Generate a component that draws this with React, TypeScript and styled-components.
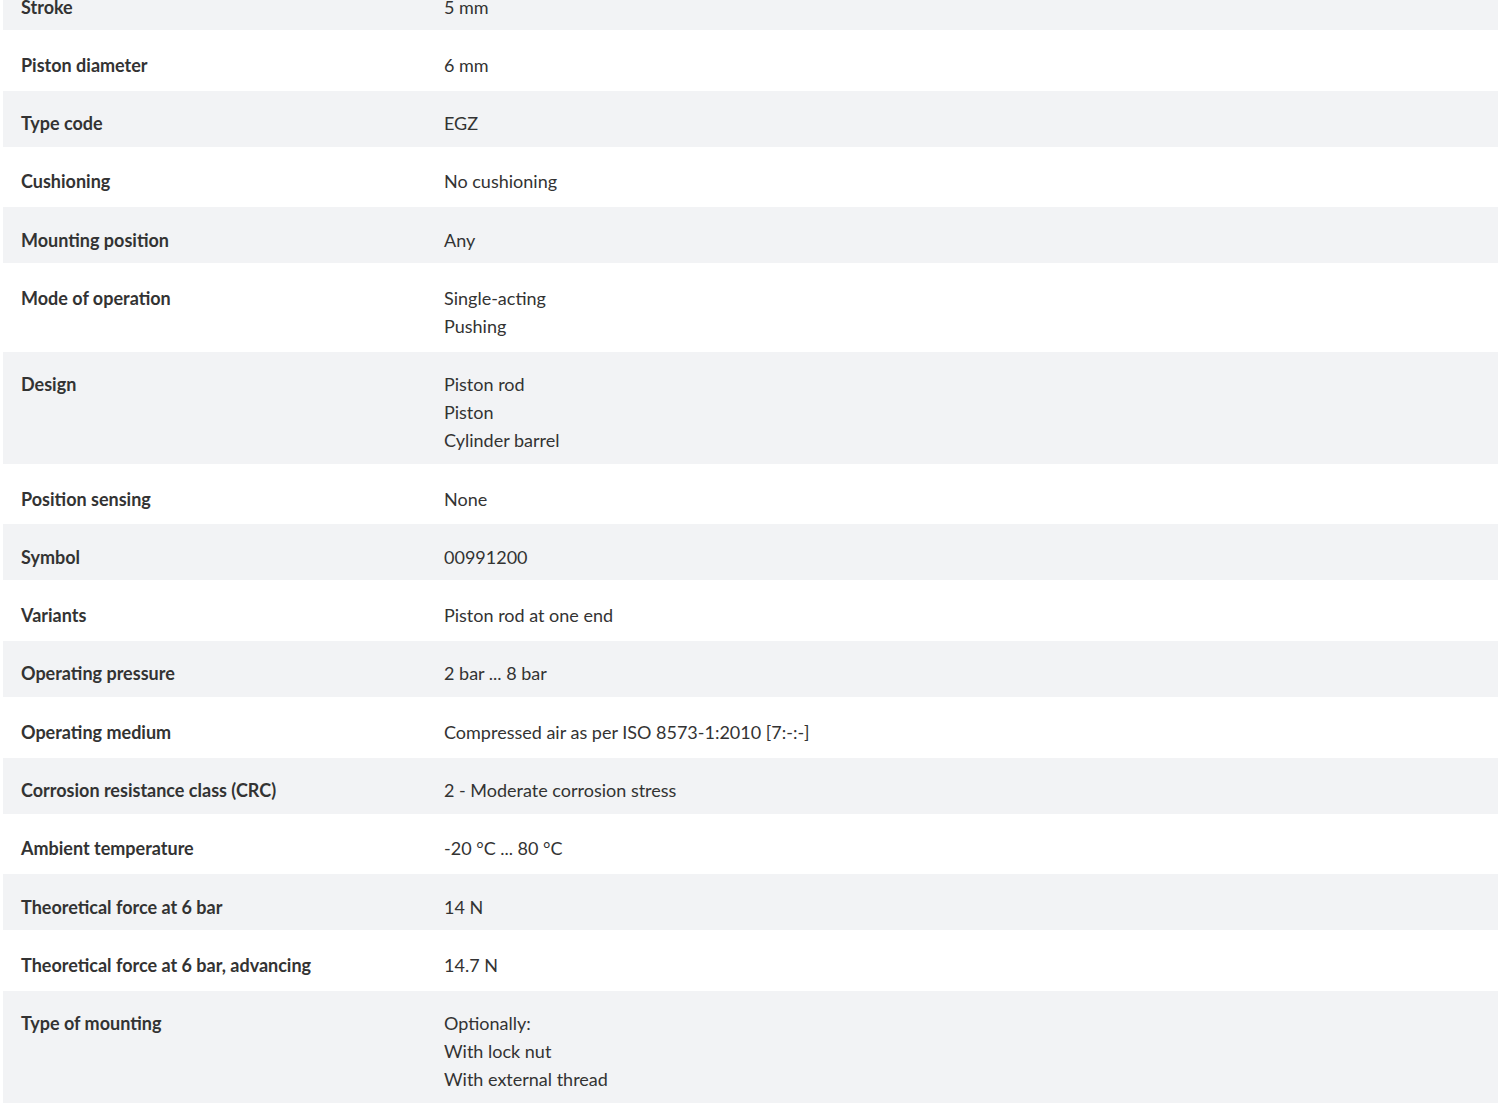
import React, { FC } from "react";
import styled, { createGlobalStyle } from "styled-components";

interface Spec {
  label: string;
  values: string[];
}

const specs: Spec[] = [
  { label: "Stroke", values: ["5 mm"] },
  { label: "Piston diameter", values: ["6 mm"] },
  { label: "Type code", values: ["EGZ"] },
  { label: "Cushioning", values: ["No cushioning"] },
  { label: "Mounting position", values: ["Any"] },
  { label: "Mode of operation", values: ["Single-acting", "Pushing"] },
  { label: "Design", values: ["Piston rod", "Piston", "Cylinder barrel"] },
  { label: "Position sensing", values: ["None"] },
  { label: "Symbol", values: ["00991200"] },
  { label: "Variants", values: ["Piston rod at one end"] },
  { label: "Operating pressure", values: ["2 bar ... 8 bar"] },
  { label: "Operating medium", values: ["Compressed air as per ISO 8573-1:2010 [7:-:-]"] },
  { label: "Corrosion resistance class (CRC)", values: ["2 - Moderate corrosion stress"] },
  { label: "Ambient temperature", values: ["-20 °C ... 80 °C"] },
  { label: "Theoretical force at 6 bar", values: ["14 N"] },
  { label: "Theoretical force at 6 bar, advancing", values: ["14.7 N"] },
  { label: "Type of mounting", values: ["Optionally:", "With lock nut", "With external thread"] },
];

const App: FC = () => {
  return (
    <>
      <GlobalStyle />
      <Page>
        <SpecTable>
          {specs.map((spec, i) => (
            <Row key={spec.label} $shaded={i % 2 === 0}>
              <Label>{spec.label}</Label>
              <Value>
                {spec.values.map((v) => (
                  <Line key={v}>{v}</Line>
                ))}
              </Value>
            </Row>
          ))}
        </SpecTable>
      </Page>
    </>
  );
};

export default App;

//---------------------------------styled component-----------------------------------
const GlobalStyle = createGlobalStyle`
  body {
    margin: 0;
    background: #fff;
    font-family: "Lato", "Open Sans", sans-serif;
    color: #333;
    overflow: hidden;
  }
`;

const Page = styled.div`
  height: 1111px;
  overflow: hidden;
  padding: 0 2px 0 3px;
`;

const SpecTable = styled.div`
  display: flex;
  flex-direction: column;
  margin-top: -26px;
`;

const Row = styled.div<{ $shaded: boolean }>`
  display: grid;
  grid-template-columns: 441px 1fr;
  align-items: start;
  background: ${({ $shaded }) => ($shaded ? "#f2f3f5" : "#fff")};
  padding: ${({ $shaded }) => ($shaded ? "18.5px 0 9.5px" : "20.8px 0 11.8px")};
  font-size: 18px;
  line-height: 28px;
`;

const Label = styled.div`
  padding-left: 18px;
  font-weight: 700;
  color: #333;
`;

const Value = styled.div`
  display: flex;
  flex-direction: column;
  font-weight: 400;
  color: #333;
`;

const Line = styled.span`
  display: block;
`;
